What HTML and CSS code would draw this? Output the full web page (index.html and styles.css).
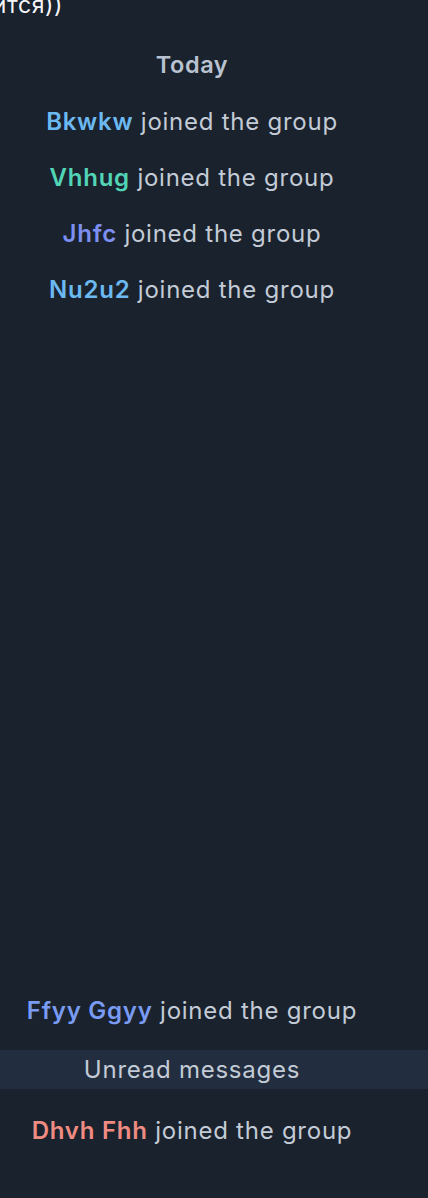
FILE: index.html
```html
<!DOCTYPE html>
<html lang="en">
<head>
<meta charset="UTF-8" />
<meta name="viewport" content="width=device-width, initial-scale=1" />
<title>Chat</title>
<link rel="stylesheet" href="styles.css">
</head>
<body>

<div class="chat">
  <div class="tail-msg"><span>получится))</span></div>

  <div class="day">Today</div>

  <div class="service"><b class="c-blue">Bkwkw</b> joined the group</div>
  <div class="service"><b class="c-teal">Vhhug</b> joined the group</div>
  <div class="service"><b class="c-violet">Jhfc</b> joined the group</div>
  <div class="service"><b class="c-blue">Nu2u2</b> joined the group</div>

  <div class="spacer"></div>

  <div class="service"><b class="c-indigo">Ffyy Ggyy</b> joined the group</div>
  <div class="unread"><span>Unread messages</span></div>
  <div class="service"><b class="c-red">Dhvh Fhh</b> joined the group</div>
</div>

</body>
</html>
```

FILE: styles.css
```css
body {
  margin: 0;
  background: #1a222d;
  font-family: Inter, "Noto Sans", sans-serif;
  color: #c3cbd6;
  overflow: hidden;
}
.chat {
  display: flex;
  flex-direction: column;
  height: 1198px;
}
.tail-msg {
  height: 18px;
  overflow: hidden;
  position: relative;
}
.tail-msg span {
  position: absolute;
  right: calc(100% - 63px);
  top: -9px;
  color: #f4f6f9;
  font-size: 23px;
  letter-spacing: 0.6px;
  white-space: nowrap;
}
.day {
  width: 384px;
  text-align: center;
  font-size: 23.5px;
  font-weight: 600;
  letter-spacing: 0.6px;
  color: #b8c2d0;
  margin-top: 34px;
  line-height: 26px;
}
.service {
  width: 384px;
  text-align: center;
  font-size: 24px;
  letter-spacing: 0.75px;
  line-height: 30px;
  margin-top: 26px;
}
.service b {
  font-weight: 600;
}
.day + .service {
  margin-top: 29px;
}
.spacer {
  height: 665px;
}
.unread {
  background: #222e3f;
  margin-top: 24px;
  height: 39px;
  display: flex;
  align-items: center;
}
.unread span {
  width: 384px;
  text-align: center;
  font-size: 24px;
  letter-spacing: 0.75px;
}
.unread + .service {
  margin-top: 27px;
}
.c-blue { color: #6cb9f2; }
.c-teal { color: #52d4b6; }
.c-violet { color: #7d8ff0; }
.c-indigo { color: #799bf3; }
.c-red { color: #ef8b81; }
```
